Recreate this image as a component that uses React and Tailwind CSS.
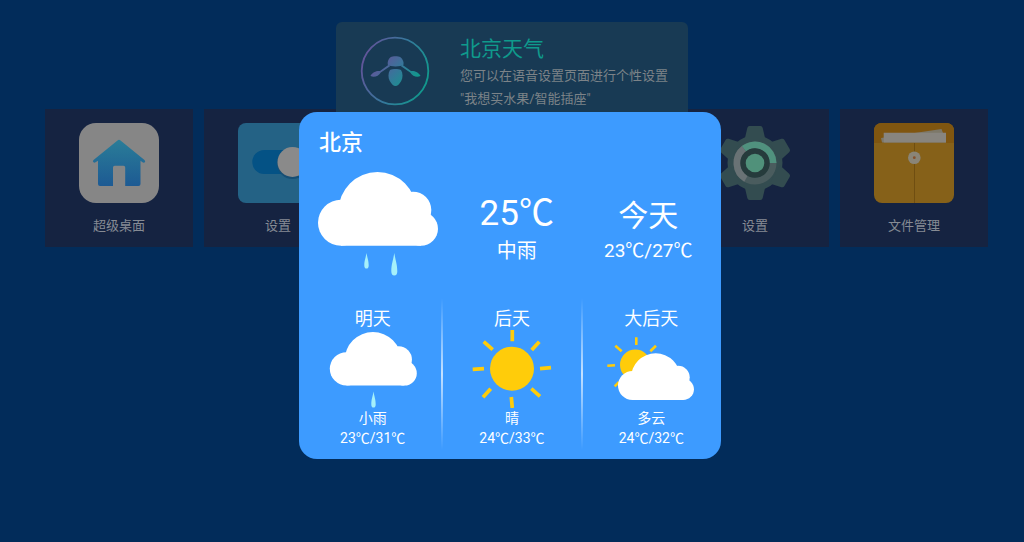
import React from 'react';

const CLOUD_FILL = '#ffffff';
const SUN_FILL = '#ffcc0a';
const DROP_FILL = '#a5f0fa';

// Drawn in a 120x74 box, callers scale it through the group transform
function Cloud({ transform }) {
  return (
    <g transform={transform} fill={CLOUD_FILL}>
      <path d="M20.5 39A39 39 0 0 1 98.5 39V60H20.5Z" />
      <circle cx="23" cy="50.8" r="23" />
      <circle cx="95" cy="38" r="18.3" />
      <circle cx="103" cy="56.8" r="17" />
      <path d="M23 40h80v33.8H23z" />
    </g>
  );
}

function Drop({ x, y, w, h }) {
  const r = w / 2;
  return (
    <path
      fill={DROP_FILL}
      d={`M${x} ${y}C${x + r * 0.5} ${y + h * 0.4} ${x + r} ${y + h * 0.5} ${x + r} ${y + h - r * 1.4}A${r} ${r * 1.4} 0 0 1 ${x - r} ${y + h - r * 1.4}C${x - r} ${y + h * 0.5} ${x - r * 0.5} ${y + h * 0.4} ${x} ${y}Z`}
    />
  );
}

function ModerateRain() {
  return (
    <svg className="h-[104px] w-[120px]" viewBox="0 0 120 104" aria-hidden="true">
      <Cloud />
      <Drop x={48.5} y={81} w={4.4} h={15.5} />
      <Drop x={76.3} y={81} w={6} h={22.5} />
    </svg>
  );
}

function LightRain() {
  return (
    <svg className="h-[78px] w-[88px]" viewBox="0 0 88 78" aria-hidden="true">
      <Cloud transform="translate(0.8 2) scale(0.725)" />
      <Drop x={44.5} y={61.5} w={4.4} h={16} />
    </svg>
  );
}

function Sunny() {
  return (
    <svg className="h-[78px] w-[88px]" viewBox="-4 0 88 78" aria-hidden="true">
      <circle cx="40" cy="38.7" r="22" fill={SUN_FILL} />
      <path
        stroke={SUN_FILL}
        strokeWidth="3.7"
        d="M40.3 0v11.3M67.3 11.7L59.7 20M79 37.7l-11 1M59.3 58.7l8.7 7.6M39.3 67l1 11M18.7 58.7L11 67.3M.7 39.3l11.3-.6M11.7 11.7l9 8"
      />
    </svg>
  );
}

function Cloudy() {
  return (
    <svg className="h-[78px] w-[88px]" viewBox="0 0 88 78" aria-hidden="true">
      <circle cx="28.3" cy="34.7" r="15.3" fill={SUN_FILL} />
      <path
        stroke={SUN_FILL}
        strokeWidth="2.6"
        d="M29.3 7.3V15M.3 35.7l7.7-.4M8.3 15.7l6.4 5.6M49 15.7l-5.7 5.6M7.7 56.3L12 52"
      />
      <Cloud transform="translate(11 23.3) scale(0.633)" />
    </svg>
  );
}

function AssistantLogo() {
  return (
    <svg className="h-[70px] w-[70px] shrink-0" viewBox="0 0 70 70" aria-hidden="true">
      <defs>
        <linearGradient id="ring" x1="0" y1="0.3" x2="1" y2="0.7">
          <stop offset="0" stopColor="#64539a" />
          <stop offset="0.5" stopColor="#36789c" />
          <stop offset="1" stopColor="#0f9a8c" />
        </linearGradient>
        <linearGradient id="bee" gradientUnits="userSpaceOnUse" x1="22" y1="20" x2="52" y2="48">
          <stop offset="0" stopColor="#64539a" />
          <stop offset="0.5" stopColor="#37769a" />
          <stop offset="1" stopColor="#0f9a8c" />
        </linearGradient>
      </defs>
      <circle cx="35" cy="35" r="33.3" fill="none" stroke="url(#ring)" strokeWidth="1.8" />
      <g fill="url(#bee)">
        <path d="M30.5 21.2C33 19.8 38 19.8 40.5 21.2C42.8 23 44 26 43.5 28.8C41 31 30 31 27.8 28.8C27.3 26 28.2 23 30.5 21.2Z" />
        <path d="M30 34C33 32.6 38 32.6 41 34C43 37 43 42 41.2 45C39.5 48 37.5 50 35.5 50C33.5 50 31.5 48 29.8 45C28 42 28 37 30 34Z" />
        <path d="M29 28.5L20 35C17 34.4 12 36.5 10.5 39.8C13 41.5 18.5 40.8 20.8 36.5L30 30.2Z" />
        <path d="M42 28.5L51 35C54 34.4 59 36.5 60.5 39.8C58 41.5 52.5 40.8 50.2 36.5L41 30.2Z" />
      </g>
    </svg>
  );
}

function HomeIcon() {
  return (
    <svg className="h-20 w-20" viewBox="0 0 80 80" aria-hidden="true">
      <defs>
        <linearGradient id="house" x1="0" y1="0" x2="0" y2="1">
          <stop offset="0" stopColor="#2a7d98" />
          <stop offset="1" stopColor="#1d5a93" />
        </linearGradient>
      </defs>
      <rect width="80" height="80" rx="17" fill="#868686" />
      <path
        fill="url(#house)"
        d="M38.5 17.5Q40 16 41.5 17.5L65.5 37Q67 38.5 65.5 39.5Q64.5 40 63.5 39.3L61.5 37.8V61Q61.5 63 59.5 63H46.2V44.5Q46.2 42.7 44.5 42.7H35.7Q34 42.7 34 44.5V63H21Q19 63 19 61V37.8L16.5 39.3Q15.5 40 14.5 39.3Q13.2 38.2 14.5 37Z"
      />
    </svg>
  );
}

function SwitchIcon() {
  return (
    <svg className="h-20 w-20" viewBox="0 0 80 80" aria-hidden="true">
      <rect width="80" height="80" rx="8" fill="#246285" />
      <rect x="14.3" y="27" width="52" height="24" rx="12" fill="#045285" />
      <circle cx="54.5" cy="40.5" r="15.5" fill="#174f75" />
      <circle cx="54.5" cy="39" r="15" fill="#8a8a8a" />
    </svg>
  );
}

function GearIcon() {
  return (
    <svg className="h-20 w-20" viewBox="0 0 80 80" aria-hidden="true">
      <g fill="#334c50">
        <circle cx="40" cy="40" r="27.5" />
        {[0, 60, 120, 180, 240, 300].map((angle) => (
          <path
            key={angle}
            transform={`rotate(${angle} 40 40)`}
            d="M29.5 17L32.3 5Q32.8 3 34.5 3H45.5Q47.2 3 47.7 5L50.5 17Z"
          />
        ))}
      </g>
      <circle cx="40" cy="40" r="18" fill="none" stroke="#4a5c5e" strokeWidth="7" />
      <path d="M31 55.6A18 18 0 0 1 29 25.8" fill="none" stroke="#697275" strokeWidth="7" />
      <path d="M29 25.8A18 18 0 0 1 58 40" fill="none" stroke="#50917e" strokeWidth="7" />
      <circle cx="40" cy="40" r="14.7" fill="#263b3c" />
      <circle cx="40" cy="40" r="9.3" fill="#50917a" />
    </svg>
  );
}

function FolderIcon() {
  return (
    <svg className="h-20 w-20" viewBox="0 0 80 80" aria-hidden="true">
      <rect width="80" height="80" rx="8" fill="#866119" />
      <path d="M0 20V8Q0 0 8 0H72Q80 0 80 8V20Z" fill="#805610" />
      <path d="M7 15L67.5 6L69 10L72 19.5H8Z" fill="#7d7869" />
      <path d="M9.7 9.7H72V19.5H9.7Z" fill="#88857f" />
      <path d="M40.5 20V80" stroke="#69490f" strokeWidth="0.8" />
      <circle cx="40.3" cy="34.7" r="6.3" fill="#8a8578" />
      <circle cx="40.3" cy="34.7" r="1.4" fill="#86502c" />
    </svg>
  );
}

const apps = [
  { id: 'home', label: '超级桌面', Icon: HomeIcon },
  { id: 'switch', label: '设置', Icon: SwitchIcon },
  { id: 'slot-3' },
  { id: 'slot-4' },
  { id: 'system', label: '设置', Icon: GearIcon },
  { id: 'files', label: '文件管理', Icon: FolderIcon },
];

const forecast = [
  { day: '明天', condition: '小雨', range: '23℃/31℃', Icon: LightRain },
  { day: '后天', condition: '晴', range: '24℃/33℃', Icon: Sunny },
  { day: '大后天', condition: '多云', range: '24℃/32℃', Icon: Cloudy },
];

function AppTile({ label, Icon }) {
  if (!Icon) {
    return <div className="bg-[#152341]" />;
  }
  return (
    <button type="button" className="flex flex-col items-center bg-[#152341] pt-[14px] pb-[11px]">
      <Icon />
      <span className="mt-[13px] text-[13px] leading-5 text-[#868b94]">{label}</span>
    </button>
  );
}

function VoiceBanner() {
  return (
    <section className="absolute top-[22px] left-1/2 flex h-[120px] w-[352px] -translate-x-1/2 items-start gap-[30px] rounded-md bg-[#183a54] pt-[14px] pl-6">
      <AssistantLogo />
      <div className="whitespace-nowrap text-[13px] leading-[23px] text-[#7c8388]">
        <h1 className="mb-0.5 text-[21px] leading-[26px] text-[#0f9a8c]">北京天气</h1>
        <p>您可以在语音设置页面进行个性设置</p>
        <p>"我想买水果/智能插座"</p>
      </div>
    </section>
  );
}

function Divider() {
  return <div className="h-[152px] bg-linear-to-b from-white/0 via-white/70 to-white/0" />;
}

function WeatherDialog() {
  return (
    <section
      role="dialog"
      aria-labelledby="city"
      className="w-[422px] rounded-[18px] bg-[#3d9bff] pt-[17px] pb-[9px] text-white"
    >
      <h2 id="city" className="pl-5 text-[22px] leading-7 font-medium">北京</h2>

      <div className="mt-[15px] grid grid-cols-[133px_1fr_1fr] pr-[7px] pl-[19px] text-center">
        <ModerateRain />
        <div className="pt-5">
          <p className="text-[35px] leading-[43px]">25℃</p>
          <p className="text-xl leading-8">中雨</p>
        </div>
        <div className="pt-5">
          <p className="text-[30px] leading-[47px]">今天</p>
          <p className="text-[19px] leading-6">23℃/27℃</p>
        </div>
      </div>

      <div className="mt-[22px] grid grid-cols-[1fr_2px_1fr_2px_1fr] pr-px pl-[5px] text-center text-sm leading-5">
        {forecast.map(({ day, condition, range, Icon }, index) => (
          <React.Fragment key={day}>
            {index > 0 && <Divider />}
            <div className="flex flex-col items-center pt-[10px]">
              <h3 className="text-lg leading-[22px]">{day}</h3>
              <Icon />
              <p>{condition}</p>
              <p>{range}</p>
            </div>
          </React.Fragment>
        ))}
      </div>
    </section>
  );
}

export default function App() {
  return (
    <main className="relative min-h-screen overflow-hidden bg-[#022c5a] font-[Roboto,'Noto_Sans_CJK_SC',sans-serif]">
      <nav className="grid grid-cols-6 gap-[11px] pt-[109px] pr-9 pl-[45px]">
        {apps.map((app) => (
          <AppTile key={app.id} label={app.label} Icon={app.Icon} />
        ))}
      </nav>
      <VoiceBanner />
      <div className="absolute inset-0 flex items-start justify-center pt-28 pr-1">
        <WeatherDialog />
      </div>
    </main>
  );
}
